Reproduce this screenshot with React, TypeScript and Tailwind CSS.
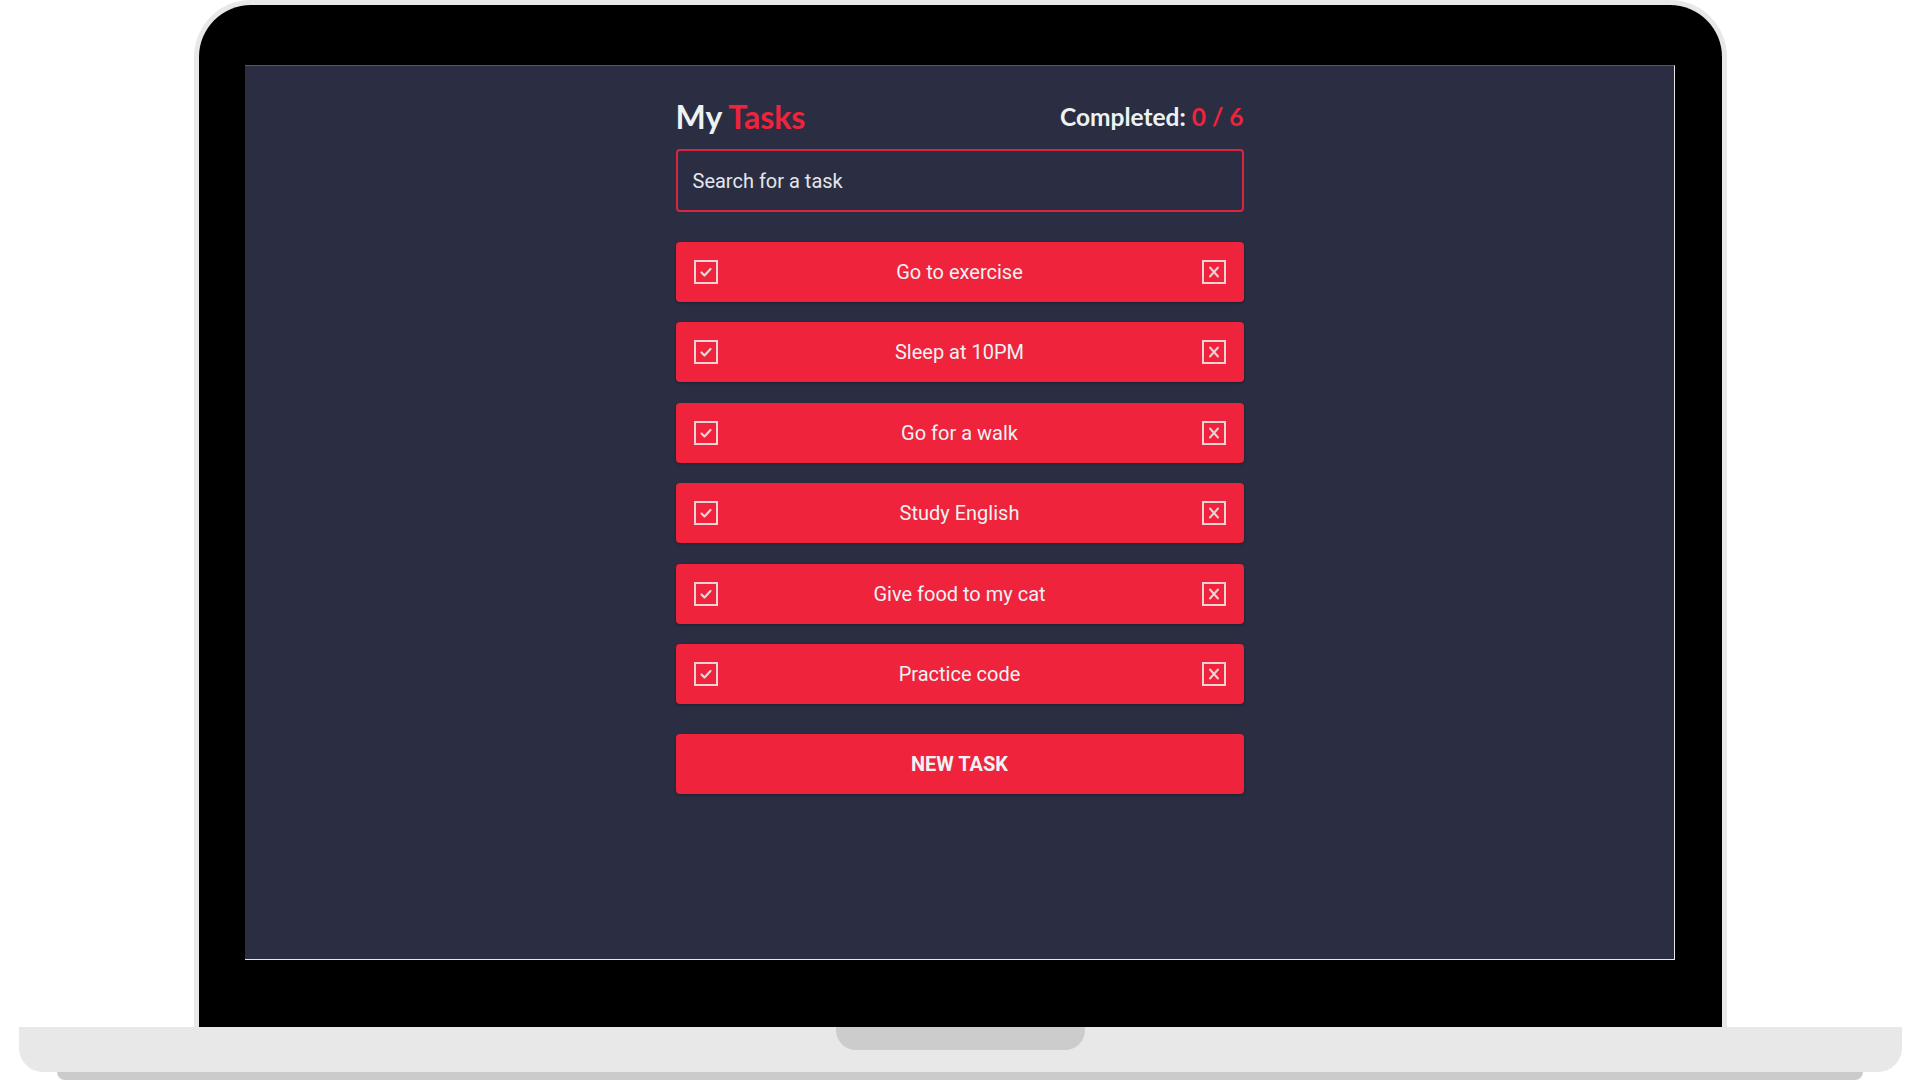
const tasks = [
  'Go to exercise',
  'Sleep at 10PM',
  'Go for a walk',
  'Study English',
  'Give food to my cat',
  'Practice code',
];

const CheckIcon = () => (
  <svg width="24" height="24" viewBox="0 0 24 24" fill="none" className="opacity-85">
    <rect x="1" y="1" width="22" height="22" stroke="#edf2f4" strokeWidth="2" />
    <path d="M7.5 12.5l3 3 6-6.5" stroke="#edf2f4" strokeWidth="2.2" strokeLinecap="round" strokeLinejoin="round" />
  </svg>
);

const CloseIcon = () => (
  <svg width="24" height="24" viewBox="0 0 24 24" fill="none" className="opacity-85">
    <rect x="1" y="1" width="22" height="22" stroke="#edf2f4" strokeWidth="2" />
    <path d="M8 7.5l8 9M16 7.5l-8 9" stroke="#edf2f4" strokeWidth="2" strokeLinecap="round" />
  </svg>
);

const TaskRow = ({ title }: { title: string }) => (
  <div className="flex h-[60px] items-center rounded-[4px] bg-[#ef233c] px-[18px] shadow-[0_1px_3px_rgba(0,0,0,0.35)]">
    <CheckIcon />
    <p className="flex-1 text-center text-[20px] text-[#edf2f4]">{title}</p>
    <CloseIcon />
  </div>
);

export default function App() {
  return (
    <div className="flex h-[1080px] w-[1920px] flex-col overflow-hidden bg-white font-['Roboto',sans-serif]">
      {/* laptop lid */}
      <div className="ml-[194px] h-[1027px] w-[1533px] shrink-0 rounded-t-[57px] border-[5px] border-b-0 border-[#e8e8e8] bg-black pl-[46px] pt-[60px]">
        <div className="h-[895px] w-[1430px] border-t border-r border-b border-t-[#55576a] border-r-[#e6e6e6] border-b-[#e6e6e6] bg-[#2b2d42]">
          <div className="mx-auto flex w-[568px] flex-col pt-[32px]">
            <div className="flex h-[37px] items-end justify-between font-['Lato',sans-serif] font-bold">
              <h1 className="text-[32px] leading-[37px] text-[#edf2f4]">
                My <span className="text-[#ef233c]">Tasks</span>
              </h1>
              <p className="pb-[1px] text-[24.5px] leading-[34px] text-[#edf2f4]">
                Completed: <span className="text-[#ef233c]">0 / 6</span>
              </p>
            </div>

            <div className="mt-[14px] flex h-[63px] items-center rounded-[4px] border-2 border-[#d9263f] px-[15px]">
              <span className="text-[20px] text-[#e4e6ea]">Search for a task</span>
            </div>

            <div className="mt-[30px] flex flex-col gap-[20.4px]">
              {tasks.map((t) => (
                <TaskRow key={t} title={t} />
              ))}
            </div>

            <button className="mt-[30px] h-[60px] rounded-[4px] bg-[#ef233c] text-[20px] font-bold text-[#edf2f4] shadow-[0_1px_3px_rgba(0,0,0,0.35)]">
              NEW TASK
            </button>
          </div>
        </div>
      </div>

      {/* laptop base */}
      <div className="ml-[19px] h-[45px] w-[1883px] shrink-0 rounded-b-[24px] bg-[#e8e8e8]">
        <div className="mx-auto h-[23px] w-[249px] rounded-b-[20px] bg-[#cccccc]" />
      </div>
      <div className="ml-[57px] h-[8px] w-[1806px] shrink-0 rounded-b-[8px] bg-[#cbcbcb]" />
    </div>
  );
}
